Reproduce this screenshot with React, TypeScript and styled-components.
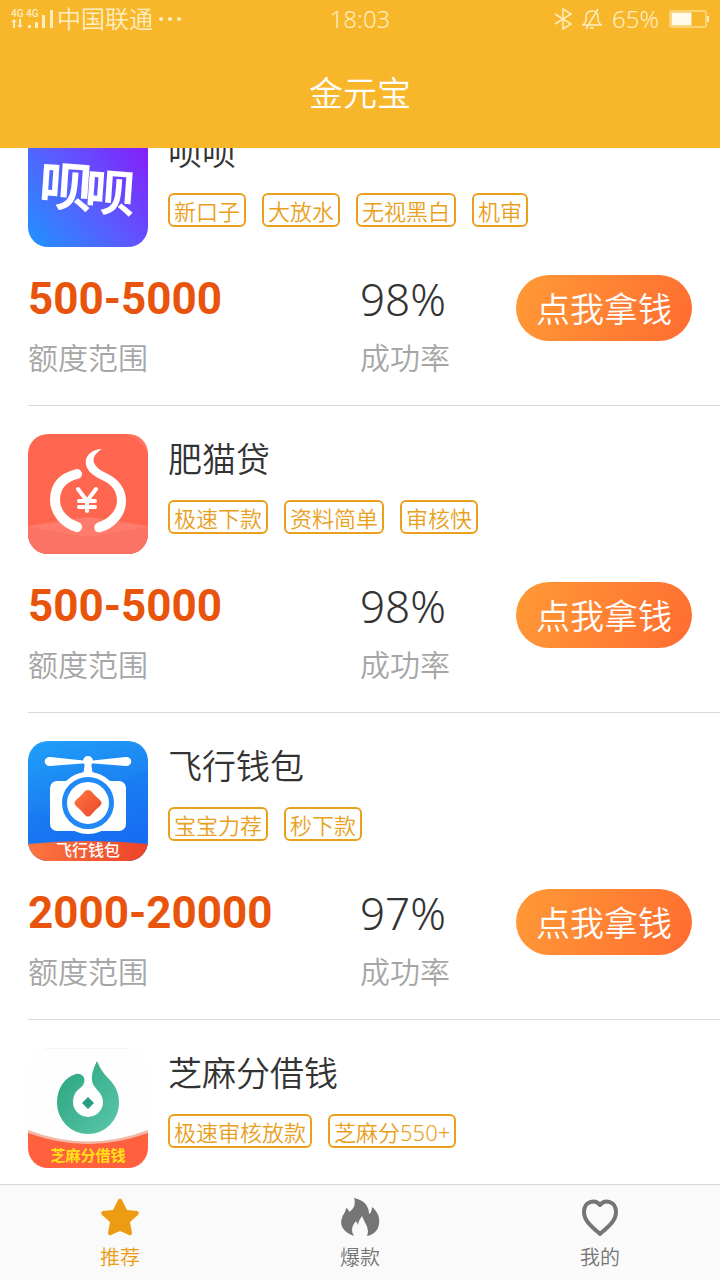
import React, { useLayoutEffect, useRef, useState } from "react";
import styled, { createGlobalStyle } from "styled-components";

const cjk = '"Noto Sans", "Noto Sans CJK SC", sans-serif';

const GlobalStyle = createGlobalStyle`
  *, *::before, *::after { box-sizing: border-box; }
  body { margin: 0; background: #fff; font-family: ${cjk}; font-weight: 350; color: #333; }
  h1, h2, p, ul, dl, dd { margin: 0; padding: 0; font-weight: 350; }
  ul { list-style: none; }
`;

const Screen = styled.div`
  display: flex;
  flex-direction: column;
  height: 100vh;
`;

const Header = styled.header`
  flex: none;
  background: #f8b62b;
  color: #fff;
`;

const StatusBar = styled.div`
  display: grid;
  grid-template-columns: 1fr auto 1fr;
  align-items: center;
  height: 38px;
  padding: 0 10px;
  color: #fdeec2;
  font-size: 24px;
  line-height: 36px;
`;

const StatusGroup = styled.div<{ $end?: boolean }>`
  display: flex;
  align-items: center;
  justify-content: ${(p) => (p.$end ? "flex-end" : "flex-start")};
  gap: ${(p) => (p.$end ? "10px" : "4px")};
`;

const PageTitle = styled.h1`
  height: 110px;
  font-size: 34px;
  line-height: 110px;
  text-align: center;
`;

const List = styled.main`
  flex: 1;
  min-height: 0;
  overflow-y: auto;
  scrollbar-width: none;
`;

const Card = styled.article`
  margin-left: 28px;
  padding: 28px 28px 28px 0;
  border-bottom: 1px solid #d9d9d9;
`;

const Product = styled.div`
  display: flex;
  gap: 20px;
`;

const Logo = styled.svg`
  flex: none;
  width: 120px;
  height: 120px;
  border-radius: 20px;
`;

const Name = styled.h2`
  margin-bottom: 16px;
  font-size: 34px;
  line-height: 50px;
`;

const Tags = styled.ul`
  display: flex;
  flex-wrap: wrap;
  gap: 16px;
`;

const Tag = styled.li`
  height: 34px;
  padding: 0 4px;
  border: 2px solid #e9a01c;
  border-radius: 6px;
  color: #e9a01c;
  font-size: 22px;
  line-height: 32px;
`;

const Offer = styled.div`
  display: grid;
  grid-template-columns: 1fr 1fr;
  margin-top: 28px;
  margin-right: -28px;
  padding-right: 28px;
`;

const OfferEnd = styled.div`
  display: flex;
  align-items: flex-start;
  justify-content: space-between;
`;

const Stat = styled.dl`
  display: flex;
  flex-direction: column-reverse;
  justify-content: flex-end;
  gap: 16px;
  height: 102px;
`;

const StatLabel = styled.dt`
  color: #a6a6a6;
  font-size: 30px;
  line-height: 38px;
`;

const Amount = styled.dd`
  color: #e8540c;
  font-family: Roboto, ${cjk};
  font-size: 44px;
  font-weight: 700;
  line-height: 48px;
`;

const Rate = styled.dd`
  font-size: 44px;
  line-height: 48px;
`;

const ApplyButton = styled.button`
  height: 66px;
  padding: 0 20px;
  border: 0;
  border-radius: 33px;
  background: linear-gradient(110deg, #ff9a36, #ff6c31);
  color: #fff;
  font: 350 34px/50px ${cjk};
  padding-top: 2px;
  white-space: nowrap;
`;

const TabBar = styled.nav`
  display: grid;
  flex: none;
  grid-template-columns: repeat(3, 1fr);
  height: 96px;
  border-top: 1px solid #d9d9d9;
  background: #fafafa;
`;

const Tab = styled.button<{ $active: boolean }>`
  display: flex;
  flex-direction: column;
  align-items: center;
  gap: 4px;
  padding: 12px 0 0;
  border: 0;
  background: none;
  color: ${(p) => (p.$active ? "#ec9c13" : "#757575")};
  font: 350 20px/34px ${cjk};

  svg { width: 40px; height: 40px; }
`;

const SignalIcon = () => (
  <svg width="43" height="22" viewBox="0 0 43 22" fill="#fdeec2" aria-hidden="true">
    <text x="1" y="9" fontFamily="Roboto" fontSize="10" fontWeight="500">4G</text>
    <text x="16" y="9" fontFamily="Roboto" fontSize="10" fontWeight="500">4G</text>
    <path d="M4 11l3 3H5v6H3v-6H1zM10 20l-3-3h2v-6h2v6h2z" />
    <path d="M18 17h3v3h-3zM25 14h3v6h-3zM32 7h3v13h-3zM40 2h3v18h-3z" />
  </svg>
);

const MoreIcon = () => (
  <svg width="24" height="6" viewBox="0 0 24 6" fill="#fdeec2" aria-hidden="true">
    <circle cx="4" cy="3" r="2" /><circle cx="13" cy="3" r="2" /><circle cx="22" cy="3" r="2" />
  </svg>
);

const BluetoothIcon = () => (
  <svg width="18" height="22" viewBox="0 0 18 22" fill="none" stroke="#fdeec2" strokeWidth="1.5" aria-hidden="true">
    <path d="M1 6l16 10-8 5V1l8 5L1 16" />
  </svg>
);

const MutedIcon = () => (
  <svg width="20" height="22" viewBox="0 0 20 22" fill="none" stroke="#fdeec2" strokeWidth="1.5" aria-hidden="true">
    <path d="M1 17h18c-3-3-3-4-3-8 0-4-2-6-6-6S4 5 4 9c0 4 0 5-3 8zM8 20h4M16 1L4 21" />
  </svg>
);

const BatteryIcon = () => (
  <svg width="41" height="18" viewBox="0 0 41 18" aria-hidden="true">
    <rect x="1" y="1" width="36" height="16" rx="1" fill="none" stroke="#fdeec2" strokeWidth="1" />
    <path d="M2.500 2.500h20v13h-20z" fill="#fffbe9" />
    <path d="M38 6h2v6h-2z" fill="#fdeec2" />
  </svg>
);

const BeibeiLogo = () => (
  <Logo viewBox="0 0 120 120" aria-hidden="true">
    <defs>
      <linearGradient id="beibei" x1="0" y1="1" x2="1" y2="0.2">
        <stop offset="0" stopColor="#1f93ff" />
        <stop offset="0.5" stopColor="#5a5cff" />
        <stop offset="1" stopColor="#8420fb" />
      </linearGradient>
    </defs>
    <path fill="url(#beibei)" d="M0 0h120v120H0z" />
    <g fill="#fff" fontWeight="700">
      <text x="10" y="77" fontSize="53" transform="rotate(4 10 77)">呗</text>
      <text x="56" y="82" fontSize="50" transform="rotate(4 56 82)">呗</text>
    </g>
  </Logo>
);

const CatLogo = () => (
  <Logo viewBox="0 0 120 120" aria-hidden="true">
    <path fill="#ff6650" d="M0 0h120v120H0z" />
    <path fill="#ff7c6c" d="M0 92l60-9 60 9v28H0z" />
    <path fill="#fb7364" d="M0 93l60 10 60-10v27H0z" />
    <path fill="#ff806f" d="M96 0h24v20c-5-10-12-16-24-20z" opacity=".5" />
    <path d="M49 40C33 44 27 54 27 66c0 13 10 23 22 27" fill="none" stroke="#fff" strokeWidth="10" strokeLinecap="round" />
    <path fill="#fff" d="M74 15c-8 5-11 11-6 17 3 4 8 6 12 8 12 6 18 16 18 27 0 15-11 27-25 31-8 2-9-8-2-10 10-3 18-12 18-21 0-10-5-16-13-20-8-4-16-8-18-16-2-9 6-16 16-16z" />
    <path d="M50 55l9 12 9-12M59 67v10M51 67h16M51 73h16" fill="none" stroke="#fff" strokeWidth="4" strokeLinecap="round" />
  </Logo>
);

const FlightLogo = () => (
  <Logo viewBox="0 0 120 120" aria-hidden="true">
    <defs>
      <linearGradient id="flight" x1="0" y1="0" x2="0.3" y2="1">
        <stop offset="0" stopColor="#20a0f8" /><stop offset="1" stopColor="#1766ee" />
      </linearGradient>
      <linearGradient id="flightBand">
        <stop offset="0" stopColor="#fc7540" /><stop offset="1" stopColor="#ed4328" />
      </linearGradient>
      <linearGradient id="flightGem" x1="0" y1="0" x2="1" y2="1">
        <stop offset="0" stopColor="#ff7a40" /><stop offset="1" stopColor="#e9452b" />
      </linearGradient>
    </defs>
    <path fill="url(#flight)" d="M0 0h120v120H0z" />
    <path fill="#1678f5" d="M0 72c22-8 32 8 55 5s35-44 65-47v80H0z" opacity=".4" />
    <rect x="22" y="40" width="76" height="50" rx="7" fill="#fff" />
    <circle cx="60" cy="62" r="31" fill="#fff" />
    <path fill="#fff" d="M60 20L22 16c-7 0-7 9 0 9l38-3zM60 20l38-4c7 0 7 9 0 9l-38-3zM57 22h6l2 12h-10z" />
    <circle cx="60" cy="20" r="5" fill="#fff" />
    <circle cx="60" cy="62" r="23.500" fill="none" stroke="#2189f5" strokeWidth="5" />
    <path fill="url(#flightGem)" d="M57 50q3-2 6 0 4 5 9 9 3 3 0 6-5 4-9 9-3 3-6 0-4-5-9-9-3-3 0-6 5-4 9-9z" />
    <path fill="url(#flightBand)" d="M0 103q60-6 120 0v17H0z" />
    <text x="60" y="115" textAnchor="middle" fill="#fff" fontSize="16" fontWeight="500">飞行钱包</text>
  </Logo>
);

const SesameLogo = () => (
  <Logo viewBox="0 0 120 120" aria-hidden="true">
    <defs>
      <linearGradient id="sesame" x1="0" y1="0" x2="1" y2="1">
        <stop offset="0" stopColor="#28a37c" /><stop offset="1" stopColor="#5bc7ac" />
      </linearGradient>
    </defs>
    <path fill="#fefefe" d="M0 0h120v120H0z" />
    <path fill="#f4f4f4" d="M12 0h88v1H12z" />
    <path fill="url(#sesame)" d="M69 13c3 7 6 12 11 17 8 8 11 15 11 25a31 31 0 0 1-62 0C29 40 37 29 48 26c6-1 10 4 8 9-1 3-3 4-5 6-4 3-6 8-6 13a15 15 0 0 0 30 0c0-7-5-11-9-16-4-7-2-15 3-25z" />
    <path fill="#269c80" d="M60 49l6 6-6 6-6-6z" />
    <path fill="#f2b6a5" d="M0 82q60 23 120 0v4q-60 23-120 0z" />
    <path fill="#ff603d" d="M0 85q60 22 120 0v35H0z" />
    <text x="60" y="113" textAnchor="middle" fill="#ffe117" fontSize="15" fontWeight="700">芝麻分借钱</text>
  </Logo>
);

const StarIcon = () => (
  <svg viewBox="0 0 40 40" aria-hidden="true">
    <path fill="currentColor" d="M18 3q2-3 4 0l5 10 10 1q3 1 1 4l-8 7 2 11q0 3-3 2l-9-4-9 4q-3 1-3-2l2-11-8-7q-2-3 1-4l10-1z" />
  </svg>
);

const FlameIcon = () => (
  <svg viewBox="0 0 40 40" aria-hidden="true">
    <path fill="currentColor" d="M14 1c10 2 15 8 15 16 2-1 3-4 3-7 6 5 8 11 7 17-1 7-6 11-12 12 3-8-2-12-5-20-2 3-4 6-4 9l-2-4c-3 4-6 8-2 15C4 35-1 29 2 21c1-4 4-6 4-10 2 1 3 2 3 4 5-3 7-8 5-14z" />
  </svg>
);

const HeartIcon = () => (
  <svg viewBox="0 0 40 40" aria-hidden="true">
    <path fill="none" stroke="currentColor" strokeWidth="4" strokeLinejoin="round" d="M20 8c-5-6-16-4-16 7 0 9 8 15 16 22 8-7 16-13 16-22 0-11-11-13-16-7z" />
  </svg>
);

interface ProductInfo {
  name: string;
  logo: React.FC;
  tags: string[];
  amount?: string;
  rate?: string;
}

const products: ProductInfo[] = [
  { name: "呗呗", logo: BeibeiLogo, tags: ["新口子", "大放水", "无视黑白", "机审"], amount: "500-5000", rate: "98%" },
  { name: "肥猫贷", logo: CatLogo, tags: ["极速下款", "资料简单", "审核快"], amount: "500-5000", rate: "98%" },
  { name: "飞行钱包", logo: FlightLogo, tags: ["宝宝力荐", "秒下款"], amount: "2000-20000", rate: "97%" },
  { name: "芝麻分借钱", logo: SesameLogo, tags: ["极速审核放款", "芝麻分550+"] },
];

const tabs = [
  { label: "推荐", icon: StarIcon },
  { label: "爆款", icon: FlameIcon },
  { label: "我的", icon: HeartIcon },
];

const ProductCard = ({ name, logo: LogoArt, tags, amount, rate }: ProductInfo) => (
  <Card>
    <Product>
      <LogoArt />
      <div>
        <Name>{name}</Name>
        <Tags>{tags.map((tag) => <Tag key={tag}>{tag}</Tag>)}</Tags>
      </div>
    </Product>
    {amount && (
      <Offer>
        <Stat>
          <StatLabel>额度范围</StatLabel>
          <Amount>{amount}</Amount>
        </Stat>
        <OfferEnd>
          <Stat>
            <StatLabel>成功率</StatLabel>
            <Rate>{rate}</Rate>
          </Stat>
          <ApplyButton type="button">点我拿钱</ApplyButton>
        </OfferEnd>
      </Offer>
    )}
  </Card>
);

export default function App() {
  const list = useRef<HTMLElement>(null);
  const [active, setActive] = useState("推荐");

  useLayoutEffect(() => {
    if (list.current) list.current.scrollTop = 49;
  }, []);

  return (
    <>
      <GlobalStyle />
      <Screen>
        <Header>
          <StatusBar>
            <StatusGroup><SignalIcon /><span>中国联通</span><MoreIcon /></StatusGroup>
            <span>18:03</span>
            <StatusGroup $end><BluetoothIcon /><MutedIcon /><span>65%</span><BatteryIcon /></StatusGroup>
          </StatusBar>
          <PageTitle>金元宝</PageTitle>
        </Header>
        <List ref={list}>
          {products.map((product) => <ProductCard key={product.name} {...product} />)}
        </List>
        <TabBar>
          {tabs.map(({ label, icon: Icon }) => (
            <Tab key={label} type="button" $active={label === active} onClick={() => setActive(label)}>
              <Icon />
              {label}
            </Tab>
          ))}
        </TabBar>
      </Screen>
    </>
  );
}
